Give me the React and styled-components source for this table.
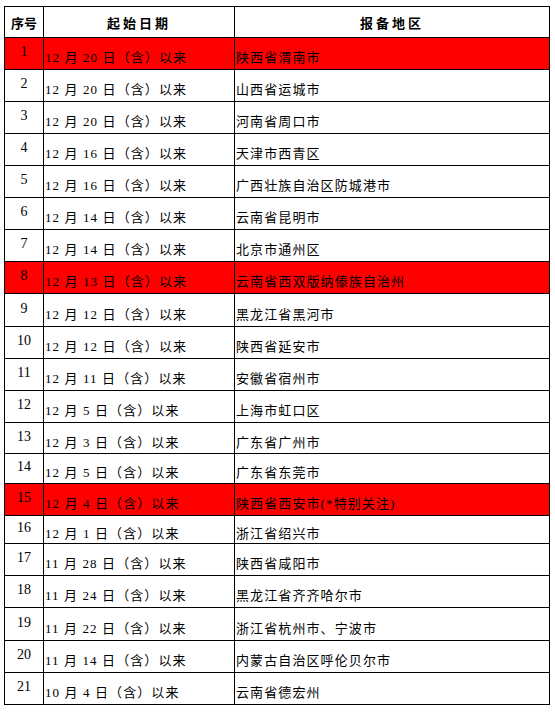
import React from "react";
import styled, { createGlobalStyle } from "styled-components";

const GlobalStyle = createGlobalStyle`
  html, body {
    margin: 0;
    padding: 0;
    background: #ffffff;
  }
`;

const Page = styled.div`
  padding: 6px 0 0 4px;
  font-family: "Liberation Serif", "Noto Sans CJK SC", serif;
  color: #000;
`;

const Table = styled.table`
  border-collapse: collapse;
  table-layout: fixed;
  width: 546px;
  border: 1px solid #000;
`;

const HeadCell = styled.th`
  height: 30px;
  padding: 0;
  border: 1px solid #000;
  font-family: "Liberation Serif", "Noto Sans CJK SC", serif;
  font-size: 13px;
  font-weight: 700;
  letter-spacing: ${({ $spacing }) => $spacing || 0}px;
  text-align: center;
  vertical-align: middle;
`;

const Row = styled.tr`
  height: ${({ $h }) => $h}px;
  background: ${({ $red }) => ($red ? "#ff0000" : "#ffffff")};
`;

const NumCell = styled.td`
  border: 1px solid #000;
  padding: 0 0 3px 0;
  font-size: 14px;
  text-align: center;
  vertical-align: middle;
`;

const TextCell = styled.td`
  border: 1px solid #000;
  padding: 6px 0 0 1px;
  font-size: 13px;
  letter-spacing: 1.1px;
  white-space: nowrap;
  overflow: hidden;
  vertical-align: middle;
`;

const rows = [
  { n: 1, date: "12 月 20 日（含）以来", area: "陕西省渭南市", red: true, h: 32 },
  { n: 2, date: "12 月 20 日（含）以来", area: "山西省运城市", h: 32 },
  { n: 3, date: "12 月 20 日（含）以来", area: "河南省周口市", h: 32 },
  { n: 4, date: "12 月 16 日（含）以来", area: "天津市西青区", h: 32 },
  { n: 5, date: "12 月 16 日（含）以来", area: "广西壮族自治区防城港市", h: 32 },
  { n: 6, date: "12 月 14 日（含）以来", area: "云南省昆明市", h: 32 },
  { n: 7, date: "12 月 14 日（含）以来", area: "北京市通州区", h: 32 },
  { n: 8, date: "12 月 13 日（含）以来", area: "云南省西双版纳傣族自治州", red: true, h: 32 },
  { n: 9, date: "12 月 12 日（含）以来", area: "黑龙江省黑河市", h: 33 },
  { n: 10, date: "12 月 12 日（含）以来", area: "陕西省延安市", h: 32 },
  { n: 11, date: "12 月 11 日（含）以来", area: "安徽省宿州市", h: 32 },
  { n: 12, date: "12 月 5 日（含）以来", area: "上海市虹口区", h: 32 },
  { n: 13, date: "12 月 3 日（含）以来", area: "广东省广州市", h: 31 },
  { n: 14, date: "12 月 5 日（含）以来", area: "广东省东莞市", h: 30 },
  { n: 15, date: "12 月 4 日（含）以来", area: "陕西省西安市(*特别关注)", red: true, h: 32 },
  { n: 16, date: "12 月 1 日（含）以来", area: "浙江省绍兴市", h: 28 },
  { n: 17, date: "11 月 28 日（含）以来", area: "陕西省咸阳市", h: 32 },
  { n: 18, date: "11 月 24 日（含）以来", area: "黑龙江省齐齐哈尔市", h: 32 },
  { n: 19, date: "11 月 22 日（含）以来", area: "浙江省杭州市、宁波市", h: 33 },
  { n: 20, date: "11 月 14 日（含）以来", area: "内蒙古自治区呼伦贝尔市", h: 32 },
  { n: 21, date: "10 月 4 日（含）以来", area: "云南省德宏州", h: 32 },
];

export default function App() {
  return (
    <Page>
      <GlobalStyle />
      <Table>
        <colgroup>
          <col style={{ width: 39 }} />
          <col style={{ width: 191 }} />
          <col style={{ width: 315 }} />
        </colgroup>
        <thead>
          <tr>
            <HeadCell>序号</HeadCell>
            <HeadCell $spacing={3}>起始日期</HeadCell>
            <HeadCell $spacing={3}>报备地区</HeadCell>
          </tr>
        </thead>
        <tbody>
          {rows.map((r) => (
            <Row key={r.n} $red={r.red} $h={r.h}>
              <NumCell>{r.n}</NumCell>
              <TextCell>{r.date}</TextCell>
              <TextCell>{r.area}</TextCell>
            </Row>
          ))}
        </tbody>
      </Table>
    </Page>
  );
}
